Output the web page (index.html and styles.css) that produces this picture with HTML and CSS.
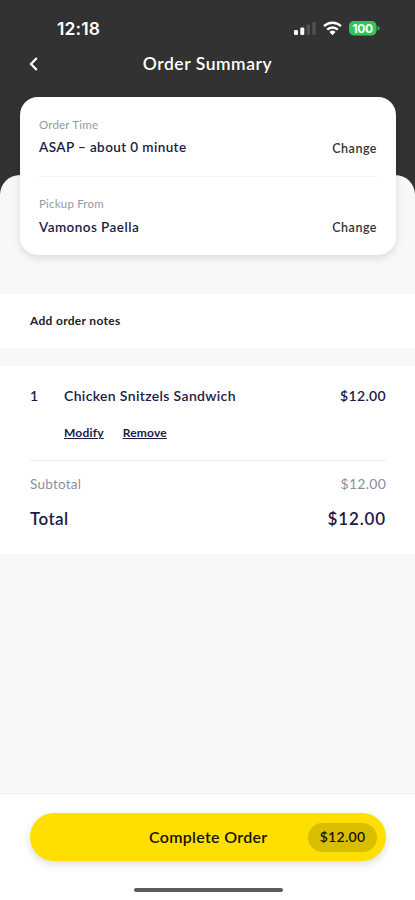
FILE: index.html
```html
<!DOCTYPE html>
<html lang="en">
<head>
<meta charset="utf-8">
<meta name="viewport" content="width=device-width, initial-scale=1">
<title>Order Summary</title>
<link rel="stylesheet" href="styles.css">
</head>
<body>
<div class="screen">
  <header class="top">
    <div class="status">
      <span class="clock">12:18</span>
      <svg class="status-icons" width="86" height="18" viewBox="0 0 86 18">
        <rect x="0" y="10" width="4" height="5" rx="1.3" fill="#fff"/>
        <rect x="6.3" y="7.500" width="4" height="7.500" rx="1.3" fill="#fff"/>
        <rect x="12.5" y="4.500" width="3.5" height="10.500" rx="1.2" fill="#505050"/>
        <rect x="18.3" y="2" width="3.5" height="13" rx="1.2" fill="#505050"/>
        <g fill="none" stroke="#fff" stroke-width="2.5">
          <path d="M30 6.2a12.2 12.2 0 0 1 17 0"/>
          <path d="M33.2 9.7a7.6 7.6 0 0 1 10.6 0"/>
        </g>
        <path d="M35.5 12a4.3 4.3 0 0 1 6 0l-3 3.2z" fill="#fff"/>
        <rect x="55" y="1" width="27.5" height="14.5" rx="4.8" fill="#30c759"/>
        <path d="M83.6 6v4.6q1.9-.6 1.9-2.3T83.600 6z" fill="#30c759"/>
        <text class="battery" x="68.700" y="12.700" text-anchor="middle">100</text>
      </svg>
    </div>
    <div class="nav">
      <svg class="back" width="12" height="16" viewBox="0 0 12 16"><path d="M9.800 2 4 8l5.800 6" fill="none" stroke="#fff" stroke-width="2.200"/></svg>
      <h1>Order Summary</h1>
    </div>
  </header>
  <main class="sheet">
    <section class="card">
      <div class="field">
        <div><p class="label time">Order Time</p><p class="value asap">ASAP – about 0 minute</p></div>
        <span class="change">Change</span>
      </div>
      <div class="field">
        <div><p class="label from">Pickup From</p><p class="value place">Vamonos Paella</p></div>
        <span class="change">Change</span>
      </div>
    </section>
    <section class="notes"><span>Add order notes</span></section>
    <section class="order">
      <div class="item"><span class="qty">1</span><span class="name">Chicken Snitzels Sandwich</span><span class="price">$12.00</span></div>
      <div class="actions"><span class="modify">Modify</span><span class="remove">Remove</span></div>
      <div class="row subtotal"><span class="sub-label">Subtotal</span><span class="price">$12.00</span></div>
      <div class="row total"><span>Total</span><span class="grand">$12.00</span></div>
    </section>
  </main>
  <footer class="footer">
    <div class="button"><span class="cta">Complete Order</span><span class="pill">$12.00</span></div>
    <div class="home"></div>
  </footer>
</div>
</body>
</html>
```
FILE: styles.css
```css
* { box-sizing: border-box; }
body { margin: 0; font-family: Lato, "Liberation Sans", sans-serif; color: #1b1b45; background: #fff; }
p, h1 { margin: 0; }
span, p { white-space: nowrap; }
.screen { width: 415px; height: 900px; display: flex; flex-direction: column; overflow: hidden; background: #323232; }
.top { height: 175px; flex: none; color: #fff; }
.status { height: 46px; padding: 12px 35px 0 57px; display: flex; justify-content: space-between; align-items: center; }
.clock { font: 600 17.5px/34px Inter, sans-serif; letter-spacing: .1px; }
.battery { font: 700 12px Inter, sans-serif; fill: #fff; letter-spacing: -.3px; }
.nav { height: 36px; display: grid; grid-template-columns: 46px 1fr 46px; align-items: center; }
.back { margin-left: 27px; }
h1 { font-size: 17.5px; line-height: 24px; font-weight: 600; text-align: center; letter-spacing: .55px; }
.sheet { flex: 1; background: #f8f8f8; border-radius: 20px 20px 0 0; min-height: 0; }
.card { height: 158px; margin: -78px 19px 0 20px; padding: 0 19px; background: #fff; border-radius: 18px; box-shadow: 0 3px 8px rgba(0,0,0,.12); }
.field { display: flex; justify-content: space-between; height: 79px; padding-top: 20px; }
.field + .field { border-top: 1px solid #f3f3f3; padding-top: 19px; }
.label { font-size: 11.5px; line-height: 16px; color: #9698a6; letter-spacing: .2px; }
.value { font-size: 13.5px; line-height: 20px; margin-top: 4px; font-weight: 600; letter-spacing: .4px; }
.place { margin-top: 5px; letter-spacing: .45px; }
.change { margin-top: 22px; font-size: 12.5px; line-height: 20px; color: #333; font-weight: 600; letter-spacing: .5px; }
.notes { margin-top: 39px; height: 54px; padding: 0 30px 2px; background: #fff; display: flex; align-items: center; color: #222; font-size: 12px; font-weight: 700; letter-spacing: .3px; }
.order { margin-top: 18px; height: 188px; padding: 20px 29px 0 30px; background: #fff; }
.item { display: flex; font-size: 14px; line-height: 20px; font-weight: 600; letter-spacing: .35px; }
.qty { width: 34px; }
.name { flex: 1; }
.actions { display: flex; gap: 20px; height: 55px; padding: 17px 0 0 34px; border-bottom: 1px solid #f0f0f0; font-size: 12px; line-height: 20px; font-weight: 700; text-decoration: underline; letter-spacing: .2px; }
.remove { margin-left: -1px; }
.row { display: flex; justify-content: space-between; }
.subtotal { padding-top: 13px; font-size: 13.5px; line-height: 20px; color: #8c8e9e; letter-spacing: .25px; }
.subtotal .price { font-size: 14px; }
.total { margin-top: 12px; font-size: 17px; line-height: 26px; font-weight: 600; letter-spacing: .4px; }
.grand { letter-spacing: .85px; }
.footer { height: 107px; flex: none; background: #fff; border-top: 1px solid #ebebeb; padding: 19px 29px 0 30px; }
.button { height: 48px; border-radius: 24px; background: #ffdf00; color: #171300; display: grid; grid-template-columns: 1fr 118px 1fr; align-items: center; box-shadow: 0 3px 8px rgba(0,0,0,.14); font-weight: 600; }
.cta { grid-column: 2; text-align: center; font-size: 16px; line-height: 24px; letter-spacing: .3px; }
.pill { justify-self: end; width: 69px; height: 29px; margin-right: 9px; border-radius: 15px; background: #d9be00; text-align: center; line-height: 28px; font-size: 14px; letter-spacing: .3px; }
.home { width: 149px; height: 4px; margin: 27px auto 0; border-radius: 2px; background: #5c5c5c; }
```
